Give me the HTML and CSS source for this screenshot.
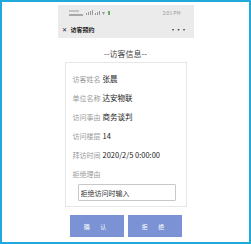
FILE: index.html
```html
<!DOCTYPE html>
<html lang="zh-CN">
<head>
    <meta charset="UTF-8">
    <title>访客预约</title>
    <link rel="stylesheet" href="styles.css">
</head>
<body>
    <div class="phone">
        <div class="topbar">
            <div class="status">
                <div class="carrier">
                    <i class="bar short"></i>
                    <i class="bar"></i>
                </div>
                <svg class="signal" width="20" height="5" viewBox="0 0 20 5">
                    <rect x="0" y="3" width="1" height="2" fill="#999"/>
                    <rect x="2" y="2" width="1" height="3" fill="#999"/>
                    <rect x="4" y="1" width="1" height="4" fill="#999"/>
                    <rect x="6" y="0" width="1" height="5" fill="#999"/>
                    <rect x="9" y="3" width="1" height="2" fill="#999"/>
                    <rect x="11" y="2" width="1" height="3" fill="#999"/>
                    <rect x="13" y="1" width="1" height="4" fill="#999"/>
                    <path d="M16 2 L19 2 L17.5 5 Z" fill="#999"/>
                </svg>
                <div class="dot"></div>
                <div class="time">2:01 PM</div>
            </div>
            <div class="titlebar">
                <span class="close">✕</span>
                <span class="title">访客预约</span>
                <span class="more">···</span>
            </div>
        </div>

        <div class="heading">--访客信息--</div>

        <div class="card">
            <div class="row"><span class="label">访客姓名</span><span class="value">张晨</span></div>
            <div class="row"><span class="label">单位名称</span><span class="value">达安物联</span></div>
            <div class="row"><span class="label">访问事由</span><span class="value">商务谈判</span></div>
            <div class="row"><span class="label">访问楼层</span><span class="value">14</span></div>
            <div class="row"><span class="label">拜访时间</span><span class="value">2020/2/5 0:00:00</span></div>
            <div class="row"><span class="label">拒绝理由</span></div>
            <input class="reason" type="text" placeholder="拒绝访问时输入">
        </div>

        <div class="actions">
            <div class="btn">确 认</div>
            <div class="btn">拒 绝</div>
        </div>
    </div>
</body>
</html>
```

FILE: styles.css
```css
html, body {
    margin: 0;
    padding: 0;
}
body {
    width: 251px;
    height: 244px;
    box-sizing: border-box;
    border: 2px solid #22a9dc;
    background: #fff;
    font-family: "Noto Sans CJK SC", "Noto Sans", sans-serif;
    display: flex;
    justify-content: center;
    overflow: hidden;
}
.phone {
    width: 136px;
    margin-top: 3px;
    display: flex;
    flex-direction: column;
}
.topbar {
    background: #ebebeb;
    height: 33px;
}
.status {
    height: 15px;
    display: flex;
    align-items: center;
    padding: 0 13px 0 11px;
}
.carrier {
    display: flex;
    flex-direction: column;
    gap: 2px;
}
.bar {
    display: block;
    width: 14px;
    height: 2px;
    background: #a8a8a8;
}
.bar.short {
    width: 10px;
    background: #c4c4c4;
}
.signal {
    margin-left: 3px;
}
.dot {
    width: 2px;
    height: 4px;
    background: #6aa86a;
    margin-left: 2px;
}
.time {
    margin-left: auto;
    font-size: 5px;
    color: #999;
}
.titlebar {
    height: 18px;
    display: flex;
    align-items: center;
    padding: 0 7px 0 4px;
    font-size: 6px;
    color: #222;
}
.close {
    font-size: 6px;
    margin-right: 4px;
}
.title {
    font-weight: bold;
}
.more {
    margin-left: auto;
    font-weight: bold;
    font-size: 6px;
    letter-spacing: -0.5px;
}
.heading {
    text-align: center;
    font-size: 8px;
    color: #444;
    margin-top: 10px;
    line-height: 12px;
}
.card {
    margin: 2px 7px 0;
    border: 1px solid #e6e6e6;
    padding: 6px 7px 5px;
    font-size: 7px;
}
.row {
    height: 19px;
    display: flex;
    align-items: center;
    white-space: nowrap;
}
.label {
    color: #9a9a9a;
    width: 30px;
}
.value {
    color: #222;
    font-size: 7.5px;
}
.reason {
    display: block;
    box-sizing: border-box;
    width: 98px;
    height: 17px;
    margin: 1px 0 0 5px;
    border: 1px solid #c8c8c8;
    border-radius: 1px;
    padding: 0 2px;
    font-family: inherit;
    font-size: 7px;
    outline: none;
}
.reason::placeholder {
    color: #333;
}
.actions {
    display: flex;
    justify-content: center;
    gap: 4px;
    margin-top: 8px;
}
.btn {
    width: 54px;
    height: 22px;
    background: #7b93d4;
    color: #fff;
    font-size: 6px;
    display: flex;
    align-items: center;
    justify-content: center;
    letter-spacing: 3px;
    word-spacing: 3px;
}
```
